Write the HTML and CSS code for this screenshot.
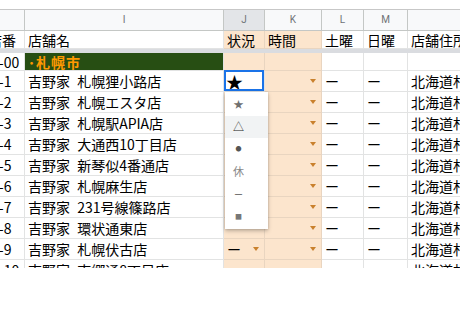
FILE: index.html
```html
<!DOCTYPE html>
<html lang="ja">
<head>
    <meta charset="UTF-8">
    <title>店舗一覧</title>
    <link rel="stylesheet" href="styles.css">
</head>
<body>
    <div class="sheet">
        <div class="topbar"></div>
        <div class="grid">
            <!-- 列見出し -->
            <div class="c hd"></div>
            <div class="c hd">I</div>
            <div class="c hd hd-sel">J</div>
            <div class="c hd">K</div>
            <div class="c hd">L</div>
            <div class="c hd">M</div>
            <div class="c hd"></div>

            <!-- 見出し行 -->
            <div class="c shift">店番</div>
            <div class="c">店舗名</div>
            <div class="c o">状況</div>
            <div class="c o">時間</div>
            <div class="c">土曜</div>
            <div class="c">日曜</div>
            <div class="c">店舗住所</div>

            <div class="sep"></div>

            <!-- 地域 -->
            <div class="c">1-00</div>
            <div class="c g">･札幌市</div>
            <div class="c o"></div>
            <div class="c o"></div>
            <div class="c"></div>
            <div class="c"></div>
            <div class="c"></div>

            <div class="c">1-1</div>
            <div class="c">吉野家 札幌狸小路店</div>
            <div class="c sel"><span class="star">★</span></div>
            <div class="c o"><span class="dd"></span></div>
            <div class="c">ー</div>
            <div class="c">ー</div>
            <div class="c">北海道札幌市中央区</div>

            <div class="c">1-2</div>
            <div class="c">吉野家 札幌エスタ店</div>
            <div class="c o"><span class="dd"></span></div>
            <div class="c o"><span class="dd"></span></div>
            <div class="c">ー</div>
            <div class="c">ー</div>
            <div class="c">北海道札幌市中央区</div>

            <div class="c">1-3</div>
            <div class="c">吉野家 札幌駅APIA店</div>
            <div class="c o"><span class="dd"></span></div>
            <div class="c o"><span class="dd"></span></div>
            <div class="c">ー</div>
            <div class="c">ー</div>
            <div class="c">北海道札幌市中央区</div>

            <div class="c">1-4</div>
            <div class="c">吉野家 大通西10丁目店</div>
            <div class="c o"><span class="dd"></span></div>
            <div class="c o"><span class="dd"></span></div>
            <div class="c">ー</div>
            <div class="c">ー</div>
            <div class="c">北海道札幌市中央区</div>

            <div class="c">1-5</div>
            <div class="c">吉野家 新琴似4番通店</div>
            <div class="c o"><span class="dd"></span></div>
            <div class="c o"><span class="dd"></span></div>
            <div class="c">ー</div>
            <div class="c">ー</div>
            <div class="c">北海道札幌市北区</div>

            <div class="c">1-6</div>
            <div class="c">吉野家 札幌麻生店</div>
            <div class="c o"><span class="dd"></span></div>
            <div class="c o"><span class="dd"></span></div>
            <div class="c">ー</div>
            <div class="c">ー</div>
            <div class="c">北海道札幌市北区</div>

            <div class="c">1-7</div>
            <div class="c">吉野家 231号線篠路店</div>
            <div class="c o"><span class="dd"></span></div>
            <div class="c o"><span class="dd"></span></div>
            <div class="c">ー</div>
            <div class="c">ー</div>
            <div class="c">北海道札幌市北区</div>

            <div class="c">1-8</div>
            <div class="c">吉野家 環状通東店</div>
            <div class="c o"></div>
            <div class="c o"><span class="dd"></span></div>
            <div class="c">ー</div>
            <div class="c">ー</div>
            <div class="c">北海道札幌市東区</div>

            <div class="c">1-9</div>
            <div class="c">吉野家 札幌伏古店</div>
            <div class="c o">ー<span class="dd"></span></div>
            <div class="c o"><span class="dd"></span></div>
            <div class="c">ー</div>
            <div class="c">ー</div>
            <div class="c">北海道札幌市東区</div>

            <div class="c">1-10</div>
            <div class="c">吉野家 南郷通8丁目店</div>
            <div class="c o"></div>
            <div class="c o"></div>
            <div class="c"></div>
            <div class="c"></div>
            <div class="c">北海道札幌市白石区</div>
        </div>

        <!-- プルダウン -->
        <div class="menu">
            <div class="item"><span class="mk mk-star">★</span></div>
            <div class="item active"><span class="mk mk-tri">△</span></div>
            <div class="item"><span class="mk mk-dot">●</span></div>
            <div class="item"><span class="mk mk-rest">休</span></div>
            <div class="item"><span class="mk mk-dash">ー</span></div>
            <div class="item"><span class="mk mk-sq">■</span></div>
        </div>
    </div>
</body>
</html>
```

FILE: styles.css
```css
body {
    margin: 0;
    background: #fff;
    font-family: "Noto Sans CJK JP", sans-serif;
}
.sheet {
    position: relative;
    height: 268px;
    overflow: hidden;
}
.topbar {
    height: 9px;
    border-bottom: 1px solid #c7c7c7;
}
.grid {
    display: grid;
    grid-template-columns: 37px 199px 41px 57px 42px 44px 140px;
    grid-template-rows: 21px 18px 4px 18px repeat(10, 21px);
    margin-left: -12px;
    width: max-content;
}
.c {
    box-sizing: border-box;
    display: flex;
    align-items: center;
    padding: 0 3px;
    border-right: 1px solid #e2e3e3;
    border-bottom: 1px solid #e2e3e3;
    font-size: 14px;
    line-height: 1;
    color: #000;
    white-space: nowrap;
    overflow: hidden;
    word-spacing: 4px;
}
.shift {
    padding-left: 0;
}
.hd {
    justify-content: center;
    background: #f8f9fa;
    border-color: #c4c7c5;
    font-family: Roboto, "Liberation Sans", sans-serif;
    font-size: 10px;
    color: #6f7276;
}
.hd-sel {
    background: #e3e5e8;
}
.sep {
    grid-column: 1 / -1;
    background: #dadce0;
}
.o {
    background: #fce5cd;
    border-color: #e9d5c0;
}
.g {
    background: #274e13;
    color: #ff9900;
    font-weight: bold;
    letter-spacing: 1px;
}
.sel {
    position: relative;
    background: #fff;
    overflow: visible;
}
.sel::after {
    content: "";
    position: absolute;
    top: -1px;
    left: 0;
    right: 0;
    bottom: 0;
    border: 2px solid #1a73e8;
}
.star {
    font-size: 17px;
    margin-left: -1px;
}
.dd {
    margin-left: auto;
    margin-right: 2px;
    width: 0;
    height: 0;
    border-left: 3.5px solid transparent;
    border-right: 3.5px solid transparent;
    border-top: 4px solid #c9812d;
}
.menu {
    position: absolute;
    top: 92px;
    left: 225px;
    width: 43px;
    padding: 1px 0;
    background: #fff;
    box-shadow: 0 2px 4px rgba(0, 0, 0, 0.25), 0 0 2px rgba(0, 0, 0, 0.15);
}
.item {
    height: 22.5px;
    display: flex;
    align-items: center;
    padding-left: 8px;
}
.item.active {
    background: #f1f3f4;
}
.mk {
    display: inline-block;
    width: 11px;
    text-align: center;
    line-height: 1;
    color: #707070;
}
.mk-star { font-size: 10px; }
.mk-tri { font-size: 11px; color: #222; }
.mk-dot { font-size: 6px; color: #555; }
.mk-rest { font-size: 11px; color: #888; }
.mk-dash { font-size: 9px; color: #555; }
.mk-sq { font-size: 7px; color: #777; }
```
